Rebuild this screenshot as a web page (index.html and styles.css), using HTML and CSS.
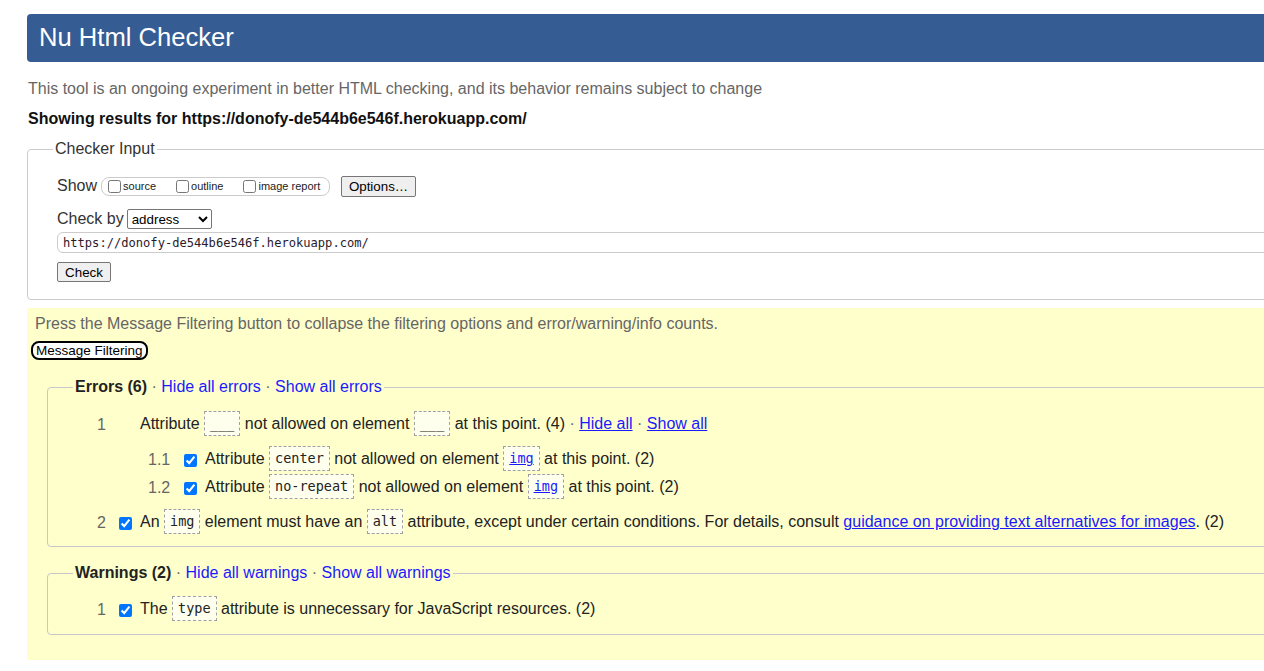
FILE: index.html
```html
<!DOCTYPE html>
<html lang="en">
<head>
<meta charset="utf-8">
<title>Nu Html Checker</title>
<link rel="stylesheet" href="styles.css">
</head>
<body>
<div class="page">
  <h1 class="header">Nu Html Checker</h1>
  <p class="intro">This tool is an ongoing experiment in better HTML checking, and its behavior remains subject to change</p>
  <p class="showing">Showing results for https://donofy-de544b6e546f.herokuapp.com/</p>

  <fieldset class="checker">
    <legend>Checker Input</legend>
    <div class="checker-body">
      <div class="show-row">
        <span class="lbl">Show</span>
        <span class="show-group">
          <label class="opt"><input type="checkbox"> source</label>
          <label class="opt"><input type="checkbox"> outline</label>
          <label class="opt"><input type="checkbox"> image report</label>
        </span>
        <button class="btn options">Options…</button>
      </div>
      <div class="checkby-row">
        <span class="lbl">Check by</span>
        <select class="sel"><option>address</option></select>
      </div>
      <input class="url" type="text" value="https://donofy-de544b6e546f.herokuapp.com/">
      <div class="check-row"><button class="btn check">Check</button></div>
    </div>
  </fieldset>

  <div class="results">
    <p class="press">Press the Message Filtering button to collapse the filtering options and error/warning/info counts.</p>
    <button class="filter">Message Filtering</button>

    <fieldset class="group errors">
      <legend><b>Errors (6)</b> <span class="dot">·</span> <a class="ln">Hide all errors</a> <span class="dot">·</span> <a class="ln">Show all errors</a></legend>
      <div class="items">
        <div class="item">
          <span class="num">1</span><span class="cb-slot"></span>
          <span class="msg">Attribute <code>___</code> not allowed on element <code>___</code> at this point. (4) <span class="dot">·</span> <a class="ul">Hide all</a> <span class="dot">·</span> <a class="ul">Show all</a></span>
        </div>
        <div class="sub">
          <div class="item">
            <span class="num subnum">1.1</span><input class="cb" type="checkbox" checked>
            <span class="msg">Attribute <code>center</code> not allowed on element <code><a class="ul">img</a></code> at this point. (2)</span>
          </div>
          <div class="item">
            <span class="num subnum">1.2</span><input class="cb" type="checkbox" checked>
            <span class="msg">Attribute <code>no-repeat</code> not allowed on element <code><a class="ul">img</a></code> at this point. (2)</span>
          </div>
        </div>
        <div class="item">
          <span class="num">2</span><input class="cb" type="checkbox" checked>
          <span class="msg">An <code>img</code> element must have an <code>alt</code> attribute, except under certain conditions. For details, consult <a class="ul">guidance on providing text alternatives for images</a>. (2)</span>
        </div>
      </div>
    </fieldset>

    <fieldset class="group warnings">
      <legend><b>Warnings (2)</b> <span class="dot">·</span> <a class="ln">Hide all warnings</a> <span class="dot">·</span> <a class="ln">Show all warnings</a></legend>
      <div class="items">
        <div class="item">
          <span class="num">1</span><input class="cb" type="checkbox" checked>
          <span class="msg">The <code>type</code> attribute is unnecessary for JavaScript resources. (2)</span>
        </div>
      </div>
    </fieldset>
  </div>
</div>
</body>
</html>
```

FILE: styles.css
```css
html, body {
  margin: 0;
  padding: 0;
  overflow: hidden;
  background: #fff;
}
body {
  font-family: "Liberation Sans", Arial, sans-serif;
  font-size: 16px;
  color: #222;
}
.page {
  width: 1320px;
  padding: 14px 0 0 27px;
}
.header {
  margin: 0;
  height: 48px;
  line-height: 47px;
  background: #365c94;
  color: #fff;
  font-weight: normal;
  font-size: 25.6px;
  padding-left: 12px;
  border-radius: 4px;
}
.intro {
  margin: 18px 0 0 1px;
  line-height: 18px;
  color: #666;
}
.showing {
  margin: 12px 0 0 1px;
  line-height: 18px;
  font-weight: bold;
  color: #111;
}
fieldset {
  margin: 0;
  padding: 0;
  border: 1px solid #ccc;
  border-radius: 4px;
}
legend {
  margin-left: 25px;
  padding: 0 2px;
  line-height: 18px;
}
.checker {
  margin-top: 12px;
}
.checker-body {
  padding: 18px 0 17px 29px;
}
.checker legend {
  color: #333;
}
.show-row {
  display: flex;
  align-items: center;
  height: 20px;
}
.lbl {
  color: #333;
}
.show-group {
  display: inline-flex;
  align-items: center;
  margin-left: 4px;
  height: 17px;
  border: 1px solid #ccc;
  border-radius: 8px;
  padding: 0 6px 0 6px;
  width: 215px;
  gap: 20px;
}
.opt {
  font-size: 11px;
  display: inline-flex;
  align-items: center;
  color: #222;
}
.opt input {
  margin: 0 2px 0 0;
  width: 13px;
  height: 13px;
}
.btn {
  font-family: "Liberation Sans", Arial, sans-serif;
  font-size: 13.33px;
  color: #000;
  background: #efefef;
  border: 1px solid #767676;
  border-radius: 2px;
  padding: 0 6px;
}
.options {
  margin-left: 11px;
  height: 21px;
  width: 75px;
}
.checkby-row {
  display: flex;
  align-items: center;
  margin-top: 13px;
  height: 20px;
}
.sel {
  margin-left: 3px;
  width: 85px;
  height: 20px;
  font-family: "Liberation Sans", Arial, sans-serif;
  font-size: 13.33px;
  border: 1px solid #767676;
  border-radius: 2px;
  background: #fff;
  color: #000;
}
.url {
  display: block;
  margin-top: 3px;
  width: 1240px;
  height: 21px;
  box-sizing: border-box;
  border: 1px solid #ccc;
  border-radius: 6px;
  padding: 0 5px;
  font-family: "DejaVu Sans Mono", "Liberation Mono", monospace;
  font-size: 12.1px;
  color: #2b1a2b;
  background: #fff;
}
.check-row {
  margin-top: 9px;
  height: 20px;
}
.check {
  height: 20px;
  width: 54px;
}
.results {
  margin-top: 8px;
  background: #ffffcc;
  padding: 7px 0 25px 4px;
}
.press {
  margin: 0 0 0 4px;
  line-height: 18px;
  color: #666;
}
.filter {
  margin-top: 8px;
  height: 19px;
  padding: 0 3px;
  font-family: "Liberation Sans", Arial, sans-serif;
  font-size: 13.5px;
  color: #000;
  background: #fff;
  border: 2px solid #000;
  border-radius: 8px;
}
.group {
  margin-left: 16px;
  border-color: #c8c8cc;
}
.errors {
  margin-top: 18px;
}
.warnings {
  margin-top: 17px;
}
.group legend {
  color: #222;
}
.dot {
  color: #666;
}
.ln {
  color: #1a1aff;
  text-decoration: none;
}
.ul {
  color: #1a1aff;
  text-decoration: underline;
}
.items {
  padding: 15px 0 9px 49px;
}
.warnings .items {
  padding: 14px 0 10px 49px;
}
.item {
  display: flex;
  align-items: center;
  height: 28px;
}
.sub {
  padding: 7px 0 7px 51px;
}
.num {
  width: 22px;
  color: #666;
}
.subnum {
  width: 36px;
}
.cb-slot {
  width: 21px;
}
.cb {
  margin: 0 8px 0 0;
  width: 13px;
  height: 13px;
}
.msg {
  white-space: nowrap;
}
code {
  display: inline-block;
  font-family: "DejaVu Sans Mono", "Liberation Mono", monospace;
  font-size: 13.5px;
  line-height: 23px;
  padding: 0 5px;
  border: 1px dashed #a0a0a0;
  background: #ffffee;
  vertical-align: middle;
  margin-top: -3px;
}
```
